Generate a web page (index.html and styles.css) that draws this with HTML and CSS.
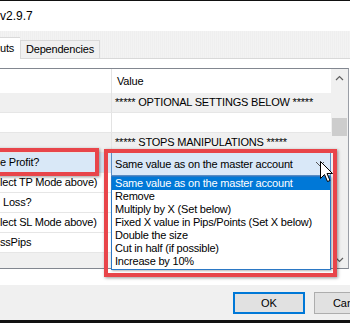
FILE: index.html
```html
<!DOCTYPE html>
<html lang="en">
<head>
  <meta charset="UTF-8">
  <title>Copier settings</title>
  <link rel="stylesheet" href="styles.css">
</head>
<body>
  <div class="window">
    <div class="titlebar">v2.9.7</div>

    <div class="tabstrip">
      <div class="tab active">uts</div>
      <div class="tab">Dependencies</div>
    </div>

    <div class="panel">
      <div class="listview">
        <div class="grid">
          <div class="row header">
            <div class="cell name"></div>
            <div class="cell value">Value</div>
          </div>
          <div class="row section">
            <div class="cell name"></div>
            <div class="cell value">***** OPTIONAL SETTINGS BELOW *****</div>
          </div>
          <div class="row">
            <div class="cell name"></div>
            <div class="cell value"></div>
          </div>
          <div class="row section">
            <div class="cell name"></div>
            <div class="cell value">***** STOPS MANIPULATIONS *****</div>
          </div>
          <div class="row selected">
            <div class="cell name">e Profit?</div>
            <div class="cell value"></div>
          </div>
          <div class="row">
            <div class="cell name">lect TP Mode above)</div>
            <div class="cell value"></div>
          </div>
          <div class="row">
            <div class="cell name indent">Loss?</div>
            <div class="cell value"></div>
          </div>
          <div class="row">
            <div class="cell name">lect SL Mode above)</div>
            <div class="cell value"></div>
          </div>
          <div class="row">
            <div class="cell name">ssPips</div>
            <div class="cell value"></div>
          </div>
          <div class="row section">
            <div class="cell name"></div>
            <div class="cell value"></div>
          </div>
        </div>

        <div class="scrollbar">
          <div class="arrow">
            <svg width="9" height="6" viewBox="0 0 9 6"><path d="M1 5 L4.5 1.5 L8 5" fill="none" stroke="#606060" stroke-width="1.2"/></svg>
          </div>
          <div class="track"><div class="thumb"></div></div>
          <div class="arrow">
            <svg width="9" height="6" viewBox="0 0 9 6"><path d="M1 1 L4.5 4.5 L8 1" fill="none" stroke="#606060" stroke-width="1.2"/></svg>
          </div>
        </div>
      </div>
    </div>

    <div class="footer">
      <button class="btn default">OK</button>
      <button class="btn">Cancel</button>
    </div>

    <!-- dropped-down combo over the Value cell -->
    <div class="combo">
      <span>Same value as on the master account</span>
      <svg class="combo-arrow" width="10" height="6" viewBox="0 0 10 6"><path d="M1 1 L5 5 L9 1" fill="none" stroke="#555" stroke-width="1"/></svg>
    </div>
    <ul class="droplist">
      <li class="current">Same value as on the master account</li>
      <li>Remove</li>
      <li>Multiply by X (Set below)</li>
      <li>Fixed X value in Pips/Points (Set X below)</li>
      <li>Double the size</li>
      <li>Cut in half (if possible)</li>
      <li>Increase by 10%</li>
    </ul>

    <!-- red highlight frames -->
    <div class="mark mark-name"></div>
    <div class="mark mark-value"></div>

    <svg class="cursor" width="14" height="22" viewBox="0 0 14 22">
      <path d="M0.5 0.5 L0.5 17.5 L4.5 13.5 L7.5 20.5 L10 19.5 L7 12.5 L12.5 12.5 Z" fill="#fff" stroke="#000" stroke-width="1"/>
    </svg>
  </div>
</body>
</html>
```

FILE: styles.css
```css
* {
  box-sizing: border-box;
}
body {
  margin: 0;
  width: 350px;
  height: 323px;
  overflow: hidden;
  background: #fff;
  font-family: "Liberation Sans", Arial, sans-serif;
  font-size: 11px;
  letter-spacing: -0.2px;
  color: #000;
}
.window {
  position: relative;
  height: 323px;
  border-top: 1px solid #111;
  border-bottom: 3px solid #111;
  display: flex;
  flex-direction: column;
  overflow: hidden;
}
.titlebar {
  height: 30px;
  line-height: 30px;
  padding-left: 0;
  font-size: 12px;
  letter-spacing: 0;
  white-space: nowrap;
}
.tabstrip {
  height: 27px;
  background: repeating-linear-gradient(90deg, #efefef 0, #efefef 1px, #f3f3f3 1px, #f3f3f3 2px);
  display: flex;
  align-items: flex-end;
}
.tab {
  height: 18px;
  line-height: 17px;
  padding: 0 5px;
  background: #f0f0f0;
  border: 1px solid #d9d9d9;
  border-bottom: none;
  white-space: nowrap;
}
.tab.active {
  width: 20px;
  height: 22px;
  line-height: 20px;
  margin-bottom: -1px;
  padding: 0 8px 0 0;
  text-align: right;
  background: #fff;
  border-left: none;
  border-right: none;
  position: relative;
}
.panel {
  height: 227px;
  border-top: 1px solid #d9d9d9;
  padding-top: 9px;
  background: #fff;
}
.listview {
  margin-left: -2px;
  width: 351px;
  height: 201px;
  border: 1px solid #828790;
  border-right-color: #9a9ea6;
  display: flex;
  overflow: hidden;
}
.grid {
  flex: 1;
  overflow: hidden;
}
.row {
  display: flex;
  height: 20px;
  line-height: 19px;
  border-bottom: 1px solid #e6e6e6;
  white-space: nowrap;
}
.row.header {
  height: 24px;
  line-height: 24px;
  border-bottom: none;
}
.row.section {
  background: #f0f0f0;
}
.row.selected .name {
  background: #d9e8f7;
}
.cell {
  overflow: hidden;
}
.cell.name {
  width: 113px;
  padding-left: 1px;
  border-right: 1px solid #e3e3e3;
}
.cell.name.indent {
  padding-left: 4px;
}
.cell.value {
  flex: 1;
  padding-left: 3px;
}
.header .cell.value {
  padding-left: 5px;
}
.scrollbar {
  width: 17px;
  background: #f0f0f0;
  display: flex;
  flex-direction: column;
}
.arrow {
  height: 17px;
  display: flex;
  align-items: center;
  justify-content: center;
}
.track {
  flex: 1;
  padding: 32px 1px 0;
}
.thumb {
  height: 18px;
  background: #cdcdcd;
}
.footer {
  flex: 1;
  background: #f0f0f0;
  display: flex;
  gap: 9px;
  padding: 7px 0 0 233px;
  overflow: hidden;
}
.btn {
  flex: none;
  width: 72px;
  height: 22px;
  font-family: inherit;
  font-size: 11px;
  color: #000;
  background: #e1e1e1;
  border: 1px solid #adadad;
  padding: 0;
}
.btn.default {
  border: 2px solid #0078d7;
}
.combo {
  position: absolute;
  left: 111px;
  top: 151px;
  width: 220px;
  height: 24px;
  line-height: 23px;
  padding-left: 3px;
  background: #d9e8f8;
  border: 1px solid #5b8fc7;
  white-space: nowrap;
}
.combo-arrow {
  position: absolute;
  right: 5px;
  top: 8px;
}
.droplist {
  position: absolute;
  left: 111px;
  top: 175px;
  width: 220px;
  height: 94px;
  margin: 0;
  padding: 0;
  list-style: none;
  background: #fff;
  border: 1px solid #2b78c5;
  box-shadow: 1px 1px 2px rgba(0, 0, 0, 0.3);
}
.droplist li {
  height: 13px;
  line-height: 13px;
  padding-left: 3px;
  white-space: nowrap;
}
.droplist li.current {
  background: #0078d7;
  color: #fff;
}
.mark {
  position: absolute;
  border: 4px solid #e8454a;
  box-shadow: 1px 1px 3px rgba(0, 0, 0, 0.4);
}
.mark-name {
  left: -6px;
  top: 147px;
  width: 105px;
  height: 28px;
}
.mark-value {
  left: 104px;
  top: 148px;
  width: 233px;
  height: 128px;
}
.cursor {
  position: absolute;
  left: 320px;
  top: 160px;
}
```
